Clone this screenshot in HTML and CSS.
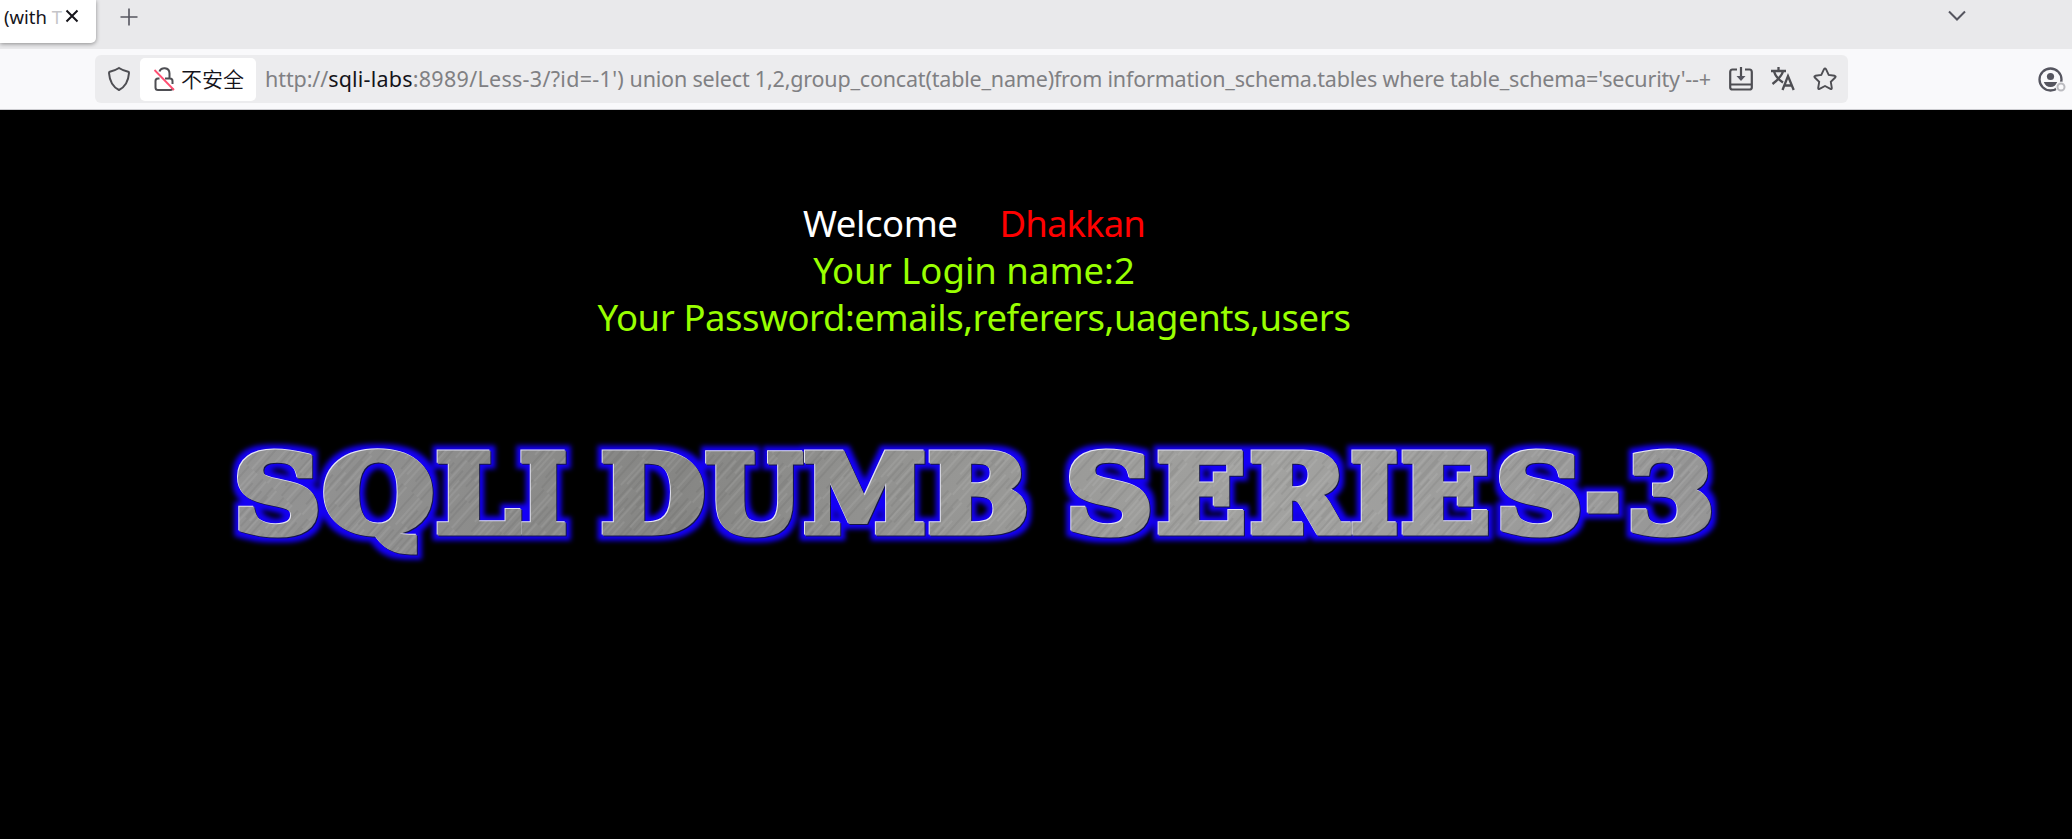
FILE: index.html
```
<!DOCTYPE html>
<html lang="zh-CN">
<head>
<meta charset="utf-8">
<title>Less-3</title>
<link rel="stylesheet" href="styles.css">
</head>
<body>
<header class="tabs">
  <div class="tab"><span class="tab-title">(with <span class="fade">T</span></span>
    <svg class="close" viewBox="0 0 14 14"><path d="M1.5 1.5l11 11M12.5 1.5l-11 11"/></svg>
  </div>
  <svg class="plus" viewBox="0 0 18 18"><path d="M9 0.5v17M0.5 9h17"/></svg>
  <svg class="chevron" viewBox="0 0 18 12"><path d="M1 1.5l8 8 8-8"/></svg>
</header>
<nav class="toolbar">
  <div class="urlbar">
    <svg class="icon shield" viewBox="0 0 24 26"><path d="M12 2c3 2 6 3 9.200 3.800.6.200.9.600.8 1.200C21.500 14 18 21 12 24 6 21 2.500 14 2 7c0-.6.2-1 .8-1.200C6 5 9 4 12 2z"/></svg>
    <div class="badge">
      <svg class="icon lock" viewBox="0 0 22 26"><path d="M6.500 5.500C7.500 0.800 16.500 0.800 16.500 7.500V13M6.500 12.500H5c-1.600 0-2.500.9-2.500 2.500v6.500c0 1.600.9 2.500 2.500 2.500h12.500c1.300 0 2-.8 2-2M12 12.500h5c1.600 0 2.500.9 2.500 2.500v3"/><path class="slash" d="M1.500 4l19.500 20"/></svg>
      <span class="insecure">不安全</span>
    </div>
    <span class="url">http://<span class="host">sqli-labs</span><span class="path">:8989/Less-3/?id=-1')</span> <span class="query">union select 1,2,group_concat(table_name)from information_schema.tables where table_schema='security'--+</span></span>
    <svg class="icon install" viewBox="0 0 24 24"><path d="M8 2.500H3.500Q1.200 2.500 1.200 5v15.500q0 2 2.300 2h17q2.300 0 2.300-2V5q0-2.500-2.300-2.500H16M1.500 17.500h21M12 0v11"/><path class="solid" d="M7.500 9h9L12 14z"/></svg>
    <svg class="icon translate" viewBox="0 0 24 24"><path d="M0 4h15M7.500 0v4M3 4.500c1.500 5 5 8.500 9 11M12 4.500C10.500 9.500 6 13.500 1.500 17M11.500 23l5.500-14 5.700 14M13.500 18.500h7"/></svg>
    <svg class="icon star" viewBox="0 0 24 24"><path d="M11 2.200q1-1.700 2 0l2.700 5.700 6 .9q1.600.4.500 1.700l-4.400 4.400 1 6q.1 1.600-1.400 1L12 19l-5.400 2.900q-1.500.6-1.400-1l1-6L1.800 10.500q-1.100-1.300.5-1.700l6-.9z"/></svg>
  </div>
  <svg class="account" viewBox="0 0 28 26"><circle cx="12.500" cy="12.500" r="11"/><circle class="solid" cx="12.500" cy="9.500" r="3.600"/><path class="solid" d="M5.800 15h13.400c-1 3-3.500 5-6.700 5s-5.700-2-6.700-5z"/><circle class="halo" cx="23" cy="20" r="5.500"/><circle class="dot" cx="23" cy="20" r="3.500"/></svg>
</nav>
<main class="page">
  <div class="message">
    <p class="welcome"><span>Welcome</span><span class="name">Dhakkan</span></p>
    <p class="login">Your Login name:2</p>
    <p class="password">Your Password:emails,referers,uagents,users</p>
  </div>
  <svg class="banner" viewBox="216 426 1516 150">
    <defs>
      <linearGradient id="tone" gradientUnits="userSpaceOnUse" x1="235" x2="1713" y1="450" y2="540">
        <stop offset="0" stop-color="#949494"/><stop offset=".3" stop-color="#868684"/><stop offset=".48" stop-color="#969694"/><stop offset=".7" stop-color="#a2a2a0"/><stop offset="1" stop-color="#969696"/>
      </linearGradient>
      <pattern id="grain" patternUnits="userSpaceOnUse" width="47" height="90" patternTransform="rotate(42)">
        <path stroke="#fff" stroke-opacity=".15" d="M3 0v30M9 30v50M17 0v40M22 20v40M31 40v50M38 0v30M44 30v40M5 50v40M14 60v30M34 0v35"/>
        <path stroke="#222" stroke-opacity=".15" d="M6 10v50M12 0v40M14 10v40M20 30v50M27 0v60M36 40v50M41 10v40M1 40v40M24 60v30M46 0v30"/>
      </pattern>
      <pattern id="metal" patternUnits="userSpaceOnUse" x="216" y="426" width="1516" height="150">
        <g transform="translate(-216 -426)"><rect x="216" y="426" width="1516" height="150" fill="url(#tone)"/><rect x="216" y="426" width="1516" height="150" fill="url(#grain)"/></g>
      </pattern>
      <filter id="glow" filterUnits="userSpaceOnUse" x="216" y="426" width="1516" height="150" color-interpolation-filters="sRGB">
        <feMorphology in="SourceAlpha" operator="dilate" radius="5" result="fat"/>
        <feGaussianBlur in="fat" stdDeviation="2.500" result="soft"/>
        <feFlood flood-color="#1400f5"/><feComposite in2="soft" operator="in" result="blue"/>
        <feOffset in="SourceAlpha" dx="-1" dy="-1" result="up"/>
        <feFlood flood-color="#e4e4f2"/><feComposite in2="up" operator="in" result="light"/>
        <feOffset in="SourceAlpha" dx="1" dy="1" result="down"/>
        <feFlood flood-color="#15154a"/><feComposite in2="down" operator="in" result="dark"/>
        <feMerge><feMergeNode in="blue"/><feMergeNode in="dark"/><feMergeNode in="light"/><feMergeNode in="SourceGraphic"/></feMerge>
      </filter>
    </defs>
    <text class="metal" y="532" filter="url(#glow)"><tspan x="234" textLength="87" lengthAdjust="spacingAndGlyphs">S</tspan><tspan x="323" textLength="111" lengthAdjust="spacingAndGlyphs">Q</tspan><tspan x="436" textLength="84" lengthAdjust="spacingAndGlyphs">L</tspan><tspan x="520" textLength="47" lengthAdjust="spacingAndGlyphs">I</tspan> <tspan x="601" textLength="104" lengthAdjust="spacingAndGlyphs">D</tspan><tspan x="706" textLength="96" lengthAdjust="spacingAndGlyphs">U</tspan><tspan x="804" textLength="122" lengthAdjust="spacingAndGlyphs">M</tspan><tspan x="928" textLength="101" lengthAdjust="spacingAndGlyphs">B</tspan> <tspan x="1066" textLength="87" lengthAdjust="spacingAndGlyphs">S</tspan><tspan x="1157" textLength="89" lengthAdjust="spacingAndGlyphs">E</tspan><tspan x="1250" textLength="97" lengthAdjust="spacingAndGlyphs">R</tspan><tspan x="1351" textLength="47" lengthAdjust="spacingAndGlyphs">I</tspan><tspan x="1401" textLength="89" lengthAdjust="spacingAndGlyphs">E</tspan><tspan x="1496" textLength="87" lengthAdjust="spacingAndGlyphs">S</tspan><tspan x="1586" textLength="34" lengthAdjust="spacingAndGlyphs">-</tspan><tspan x="1627" textLength="88" lengthAdjust="spacingAndGlyphs">3</tspan></text>
  </svg>
</main>
</body>
</html>
```
FILE: styles.css
```
* { box-sizing: border-box; }
body {
  margin: 0;
  width: 2072px;
  height: 839px;
  overflow: hidden;
  background: #000;
  font-family: "Noto Sans", "Noto Sans CJK SC", sans-serif;
  display: flex;
  flex-direction: column;
}
svg { flex: none; fill: none; stroke: #55555f; }
.tabs { height: 49px; background: #e9e9eb; display: flex; flex: none; }
.tab {
  width: 96px;
  height: 43px;
  padding: 0 17px 11px 4px;
  background: #fff;
  border-radius: 0 0 5px 0;
  box-shadow: 0 1px 4px rgba(0, 0, 0, .4);
  display: flex;
  align-items: center;
  justify-content: space-between;
  color: #15141a;
  font-size: 18.500px;
  white-space: nowrap;
}
.fade { color: #c5c5c8; }
.close { width: 14px; height: 14px; stroke: #15141a; stroke-width: 2; }
.plus { width: 18px; height: 18px; margin: 8px 0 0 24px; stroke-width: 1.6; }
.chevron { width: 18px; height: 12px; margin: 10px 106px 0 auto; stroke-width: 2; }
.toolbar {
  height: 61px;
  flex: none;
  background: #f9f9fb;
  border-bottom: 1px solid #ccccd0;
  padding: 6px 6px 0 95px;
  display: flex;
  justify-content: space-between;
}
.urlbar {
  width: 1753px;
  height: 48px;
  background: #ececee;
  border-radius: 6px;
  padding-left: 12px;
  display: flex;
  align-items: center;
}
.icon { stroke: #4e4e53; stroke-width: 2; }
.shield { width: 24px; height: 26px; }
.badge {
  width: 116px;
  height: 43px;
  margin-left: 9px;
  padding-left: 13px;
  background: #fff;
  border-radius: 5px;
  display: flex;
  align-items: center;
}
.lock { width: 22px; height: 26px; }
.slash { stroke: #ff4f72; stroke-width: 1.8; }
.insecure { margin-left: 6px; padding-bottom: 2px; font: 350 21px/30px "Noto Sans CJK SC", sans-serif; color: #15141a; white-space: nowrap; }
.url { width: 1464px; margin-left: 9px; padding-bottom: 2px; color: #808083; font-size: 21.500px; letter-spacing: -.085px; white-space: nowrap; }
.host { color: #15141a; letter-spacing: .2px; }
.path { letter-spacing: .3px; }
.query { letter-spacing: -.19px; }
.install { width: 24px; height: 24px; stroke-width: 2.200; }
.translate { width: 24px; height: 24px; margin-left: 18px; stroke-width: 2.300; }
.star { width: 24px; height: 24px; margin-left: 18px; stroke-width: 1.900; }
.solid { fill: #55555f; stroke: none; }
.account { width: 28px; height: 26px; margin-top: 12px; stroke-width: 2.300; }
.halo { fill: #f9f9fb; stroke: none; }
.dot { stroke: #bbbbc0; stroke-width: 2; }
.page { width: 1948px; display: flex; flex-direction: column; align-items: center; }
.message { padding-top: 90px; height: 316px; text-align: center; font-size: 36.500px; line-height: 47px; color: #9f0; }
.message p { margin: 0; white-space: nowrap; }
.welcome { display: flex; justify-content: center; gap: 42px; color: #fff; letter-spacing: -.45px; }
.name { color: #f00; letter-spacing: -.9px; }
.password { letter-spacing: -.44px; }
.banner { width: 1516px; height: 150px; }
.metal {
  font: bold 106px "DejaVu Serif", serif;
  fill: url(#metal);
  stroke: url(#metal);
  stroke-width: 7px;
  stroke-linejoin: miter;
  stroke-miterlimit: 2;
}
```
